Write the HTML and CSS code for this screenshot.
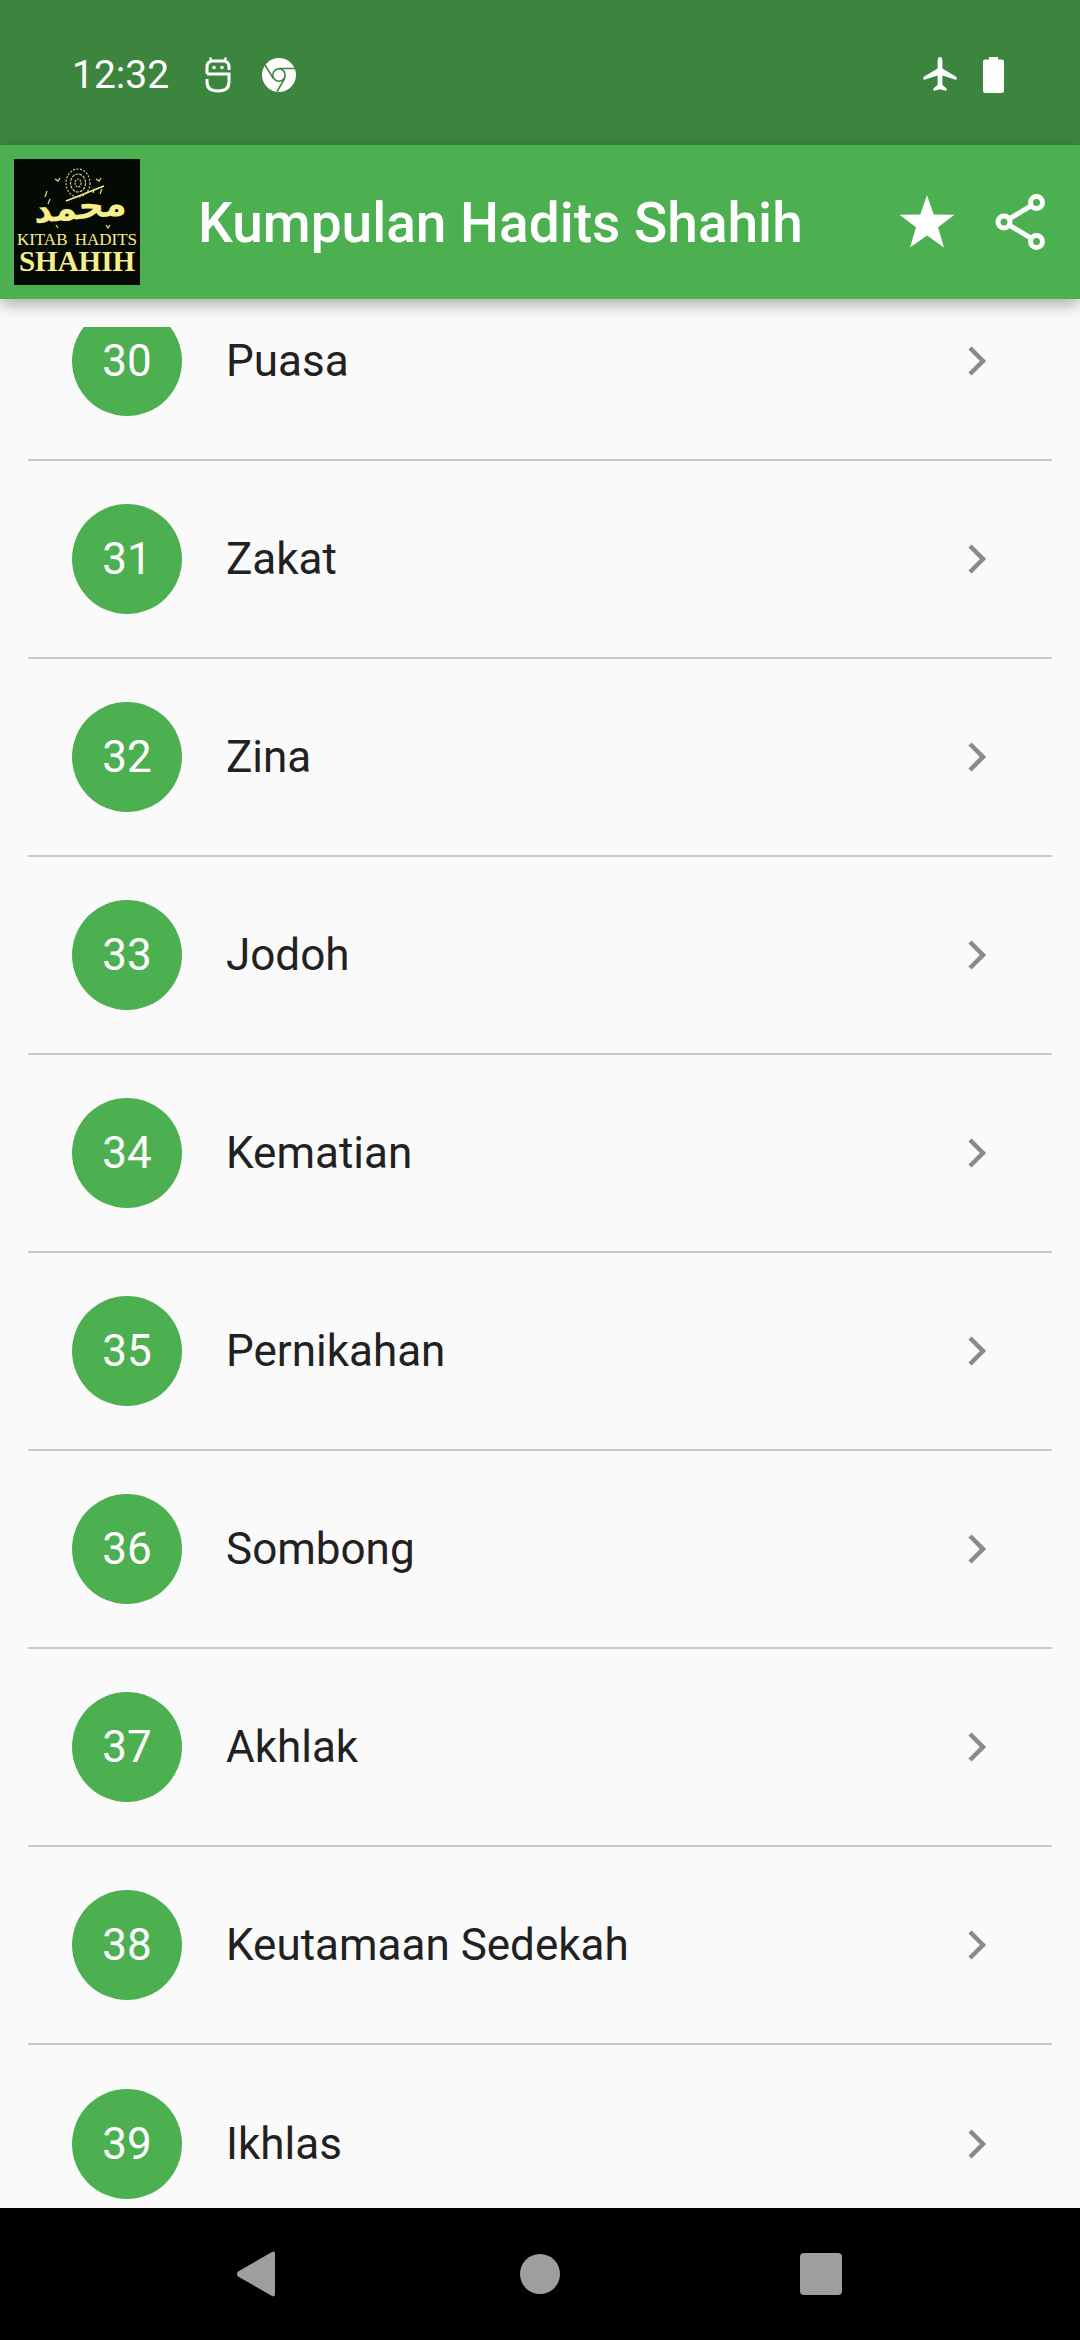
FILE: index.html
```html
<!DOCTYPE html>
<html lang="id">
<head>
  <meta charset="UTF-8" />
  <meta name="viewport" content="width=device-width, initial-scale=1.0"/>
  <title>Kumpulan Hadits Shahih</title>
  <link rel="stylesheet" href="styles.css">
</head>
<body>

<div class="status-bar">
  <span class="jam">12:32</span>
  <svg class="ikon-robot" viewBox="0 0 26 36" width="26" height="36">
    <path d="M5 0.500 L6.500 4 M21 0.500 L19.500 4" stroke="#fff" stroke-width="2.200" fill="none"/>
    <path d="M2 17 V10 Q2 4 8 4 H18 Q24 4 24 10 V13 M2 17 H24 V25 Q24 34 13 34 Q2 34 2 25 V22" stroke="#fff" stroke-width="3" fill="none"/>
    <circle cx="9" cy="10.500" r="1.800" fill="#fff"/>
    <circle cx="17" cy="10.500" r="1.800" fill="#fff"/>
  </svg>
  <svg class="ikon-chrome" viewBox="0 0 34 34" width="34" height="34">
    <circle cx="17" cy="17" r="17" fill="#fff"/>
    <circle cx="17" cy="17" r="6.200" fill="#fff" stroke="#3b853f" stroke-width="1.600"/>
    <path d="M17 10.500 H33 M11.300 20.300 L3 7 M22.800 20.300 L15 33.500" stroke="#3b853f" stroke-width="1.600" fill="none"/>
  </svg>
  <span class="spasi"></span>
  <svg class="ikon-pesawat" viewBox="0 0 34 36" width="34" height="36">
    <path d="M17 0 Q19.400 0 19.400 4 V11.500 L33.500 20 V23 L19.400 18.500 V28 L23.500 31.200 V34 L17 32.200 L10.500 34 V31.200 L14.600 28 V18.500 L0.500 23 V20 L14.600 11.500 V4 Q14.600 0 17 0 Z" fill="#fff"/>
  </svg>
  <svg class="ikon-baterai" viewBox="0 0 21 36" width="21" height="36">
    <path d="M6 0 H15 V2.500 H19 Q21 2.500 21 4.500 V34 Q21 36 19 36 H2 Q0 36 0 34 V4.500 Q0 2.500 2 2.500 H6 Z" fill="#fff"/>
  </svg>
</div>

<header class="app-bar">
  <div class="logo">
    <svg class="logo-kaligrafi" viewBox="0 0 126 72" width="126" height="72">
      <!-- segel kecil di atas -->
      <g fill="none" stroke="#cfc98c" stroke-width="1.200">
        <ellipse cx="64" cy="24" rx="12" ry="14" stroke-dasharray="2 1.500"/>
        <ellipse cx="64" cy="24" rx="7.500" ry="9" stroke-dasharray="3 1"/>
        <ellipse cx="64" cy="24" rx="3" ry="4" stroke-dasharray="2 1"/>
      </g>
      <!-- tanda kecil -->
      <path d="M41 20 l3 2 l2 -3 M82 20 l3 2 l2 -3 M33 32 l-2 6 M36 40 l-2 5 M88 30 l-2 5 M80 30 l-1 4 M42 66 l2 3 M92 66 l2 3 l2 -3" fill="none" stroke="#d9d38a" stroke-width="1.300"/>
      <text class="logo-arab" x="66" y="60" text-anchor="middle" transform="rotate(-5 66 50)">محمد</text>
      <path d="M52 42 L90 27" stroke="#f5ee8a" stroke-width="1.500" fill="none"/>
    </svg>
    <div class="logo-kitab">KITAB HADITS</div>
    <div class="logo-shahih">SHAHIH</div>
  </div>
  <h1>Kumpulan Hadits Shahih</h1>
  <svg class="ikon-bintang" viewBox="0 0 56 54" width="56" height="54">
    <path d="M28 0 L34.700 19.500 L55.500 19.800 L39 32.300 L45 52.500 L28 40.500 L11 52.500 L17 32.300 L0.500 19.800 L21.300 19.500 Z" fill="#fff"/>
  </svg>
  <svg class="ikon-bagikan" viewBox="0 0 52 56" width="52" height="56">
    <g fill="none" stroke="#fff" stroke-width="5">
      <circle cx="41.500" cy="8.500" r="6"/>
      <circle cx="9" cy="28" r="6"/>
      <circle cx="41.500" cy="47.500" r="6"/>
      <path d="M14.500 24.700 L36 11.800 M14.500 31.300 L36 44.200"/>
    </g>
  </svg>
</header>

<main class="daftar">
  <div class="baris baris-awal"><span class="nomor">30</span><span class="judul">Puasa</span><svg class="panah" viewBox="0 0 20 32" width="20" height="32"><path d="M3 3 L16 16 L3 29" /></svg></div>
  <div class="baris"><span class="nomor">31</span><span class="judul">Zakat</span><svg class="panah" viewBox="0 0 20 32" width="20" height="32"><path d="M3 3 L16 16 L3 29" /></svg></div>
  <div class="baris"><span class="nomor">32</span><span class="judul">Zina</span><svg class="panah" viewBox="0 0 20 32" width="20" height="32"><path d="M3 3 L16 16 L3 29" /></svg></div>
  <div class="baris"><span class="nomor">33</span><span class="judul">Jodoh</span><svg class="panah" viewBox="0 0 20 32" width="20" height="32"><path d="M3 3 L16 16 L3 29" /></svg></div>
  <div class="baris"><span class="nomor">34</span><span class="judul">Kematian</span><svg class="panah" viewBox="0 0 20 32" width="20" height="32"><path d="M3 3 L16 16 L3 29" /></svg></div>
  <div class="baris"><span class="nomor">35</span><span class="judul">Pernikahan</span><svg class="panah" viewBox="0 0 20 32" width="20" height="32"><path d="M3 3 L16 16 L3 29" /></svg></div>
  <div class="baris"><span class="nomor">36</span><span class="judul">Sombong</span><svg class="panah" viewBox="0 0 20 32" width="20" height="32"><path d="M3 3 L16 16 L3 29" /></svg></div>
  <div class="baris"><span class="nomor">37</span><span class="judul">Akhlak</span><svg class="panah" viewBox="0 0 20 32" width="20" height="32"><path d="M3 3 L16 16 L3 29" /></svg></div>
  <div class="baris"><span class="nomor">38</span><span class="judul">Keutamaan Sedekah</span><svg class="panah" viewBox="0 0 20 32" width="20" height="32"><path d="M3 3 L16 16 L3 29" /></svg></div>
  <div class="baris baris-akhir"><span class="nomor">39</span><span class="judul">Ikhlas</span><svg class="panah" viewBox="0 0 20 32" width="20" height="32"><path d="M3 3 L16 16 L3 29" /></svg></div>
</main>

<nav class="nav-bar">
  <svg class="nav-kembali" viewBox="0 0 39 46" width="39" height="46"><path d="M36 1 Q39 -0.500 39 3 V43 Q39 46.500 36 45 L2 25.500 Q0 23 2 20.500 Z" fill="#9e9e9e"/></svg>
  <svg class="nav-beranda" viewBox="0 0 40 40" width="40" height="40"><circle cx="20" cy="20" r="20" fill="#9e9e9e"/></svg>
  <svg viewBox="0 0 42 42" width="42" height="42"><rect width="42" height="42" rx="4" fill="#9e9e9e"/></svg>
</nav>

</body>
</html>
```

FILE: styles.css
```css
* { box-sizing: border-box; }

html, body {
  margin: 0;
  height: 2340px;
  overflow: hidden;
}

body {
  display: flex;
  flex-direction: column;
  font-family: 'Roboto', sans-serif;
  background: #fafafa;
  color: #212121;
}

.status-bar {
  height: 145px;
  flex: none;
  display: flex;
  align-items: center;
  padding: 5px 76px 0 72px;
  background-color: #3b853f;
  color: white;
}

.jam {
  font-size: 39px;
  width: 133px;
}

.ikon-robot { margin-right: 31px; }

.spasi { flex: 1; }

.ikon-pesawat { margin-right: 26px; }

.app-bar {
  height: 154px;
  flex: none;
  display: flex;
  align-items: center;
  padding: 0 33px 0 14px;
  background-color: #4caf50;
  box-shadow: 0 6px 14px rgba(0,0,0,0.3);
  position: relative;
  z-index: 2;
}

.app-bar h1 {
  flex: 1;
  margin: 2px 0 0 58px;
  font-size: 55px;
  font-weight: 500;
  color: white;
}

.ikon-bintang { margin-right: 40px; }

.logo {
  width: 126px;
  height: 126px;
  flex: none;
  display: flex;
  flex-direction: column;
  align-items: center;
  background-color: #050a05;
  font-family: 'Liberation Serif', serif;
  color: #f5ee8a;
}

.logo-kaligrafi {
  flex: none;
  overflow: visible;
}

.logo-arab {
  font-family: 'DejaVu Sans', sans-serif;
  font-size: 36px;
  font-weight: bold;
  fill: #f5ee8a;
}

.logo-kitab {
  font-size: 17px;
  line-height: 18px;
  margin-top: 0;
  word-spacing: 3px;
  white-space: nowrap;
}

.logo-shahih {
  font-size: 29px;
  line-height: 25px;
  font-weight: bold;
  white-space: nowrap;
}

.daftar {
  flex: 1;
  min-height: 0;
  overflow: hidden;
  margin-top: 28px;
  padding: 0 28px;
}

.baris {
  height: 198px;
  flex: none;
  display: flex;
  align-items: center;
  padding: 0 65px 0 44px;
  border-bottom: 2px solid #c9c9c9;
}

/* baris pertama sudah tergulir sebagian */
.baris-awal { margin-top: -64px; }

.baris-akhir { border-bottom: none; }

.nomor {
  width: 110px;
  height: 110px;
  flex: none;
  display: flex;
  align-items: center;
  justify-content: center;
  background-color: #4caf50;
  border-radius: 50%;
  color: white;
  font-size: 44px;
}

.judul {
  flex: 1;
  margin-left: 44px;
  font-size: 44px;
}

.panah {
  flex: none;
}

.panah path {
  fill: none;
  stroke: #8a8a8a;
  stroke-width: 4.500;
}

.nav-bar {
  height: 132px;
  flex: none;
  display: flex;
  align-items: center;
  padding-left: 236px;
  background: black;
}

.nav-kembali { margin-right: 245px; }

.nav-beranda { margin-right: 240px; }
```
